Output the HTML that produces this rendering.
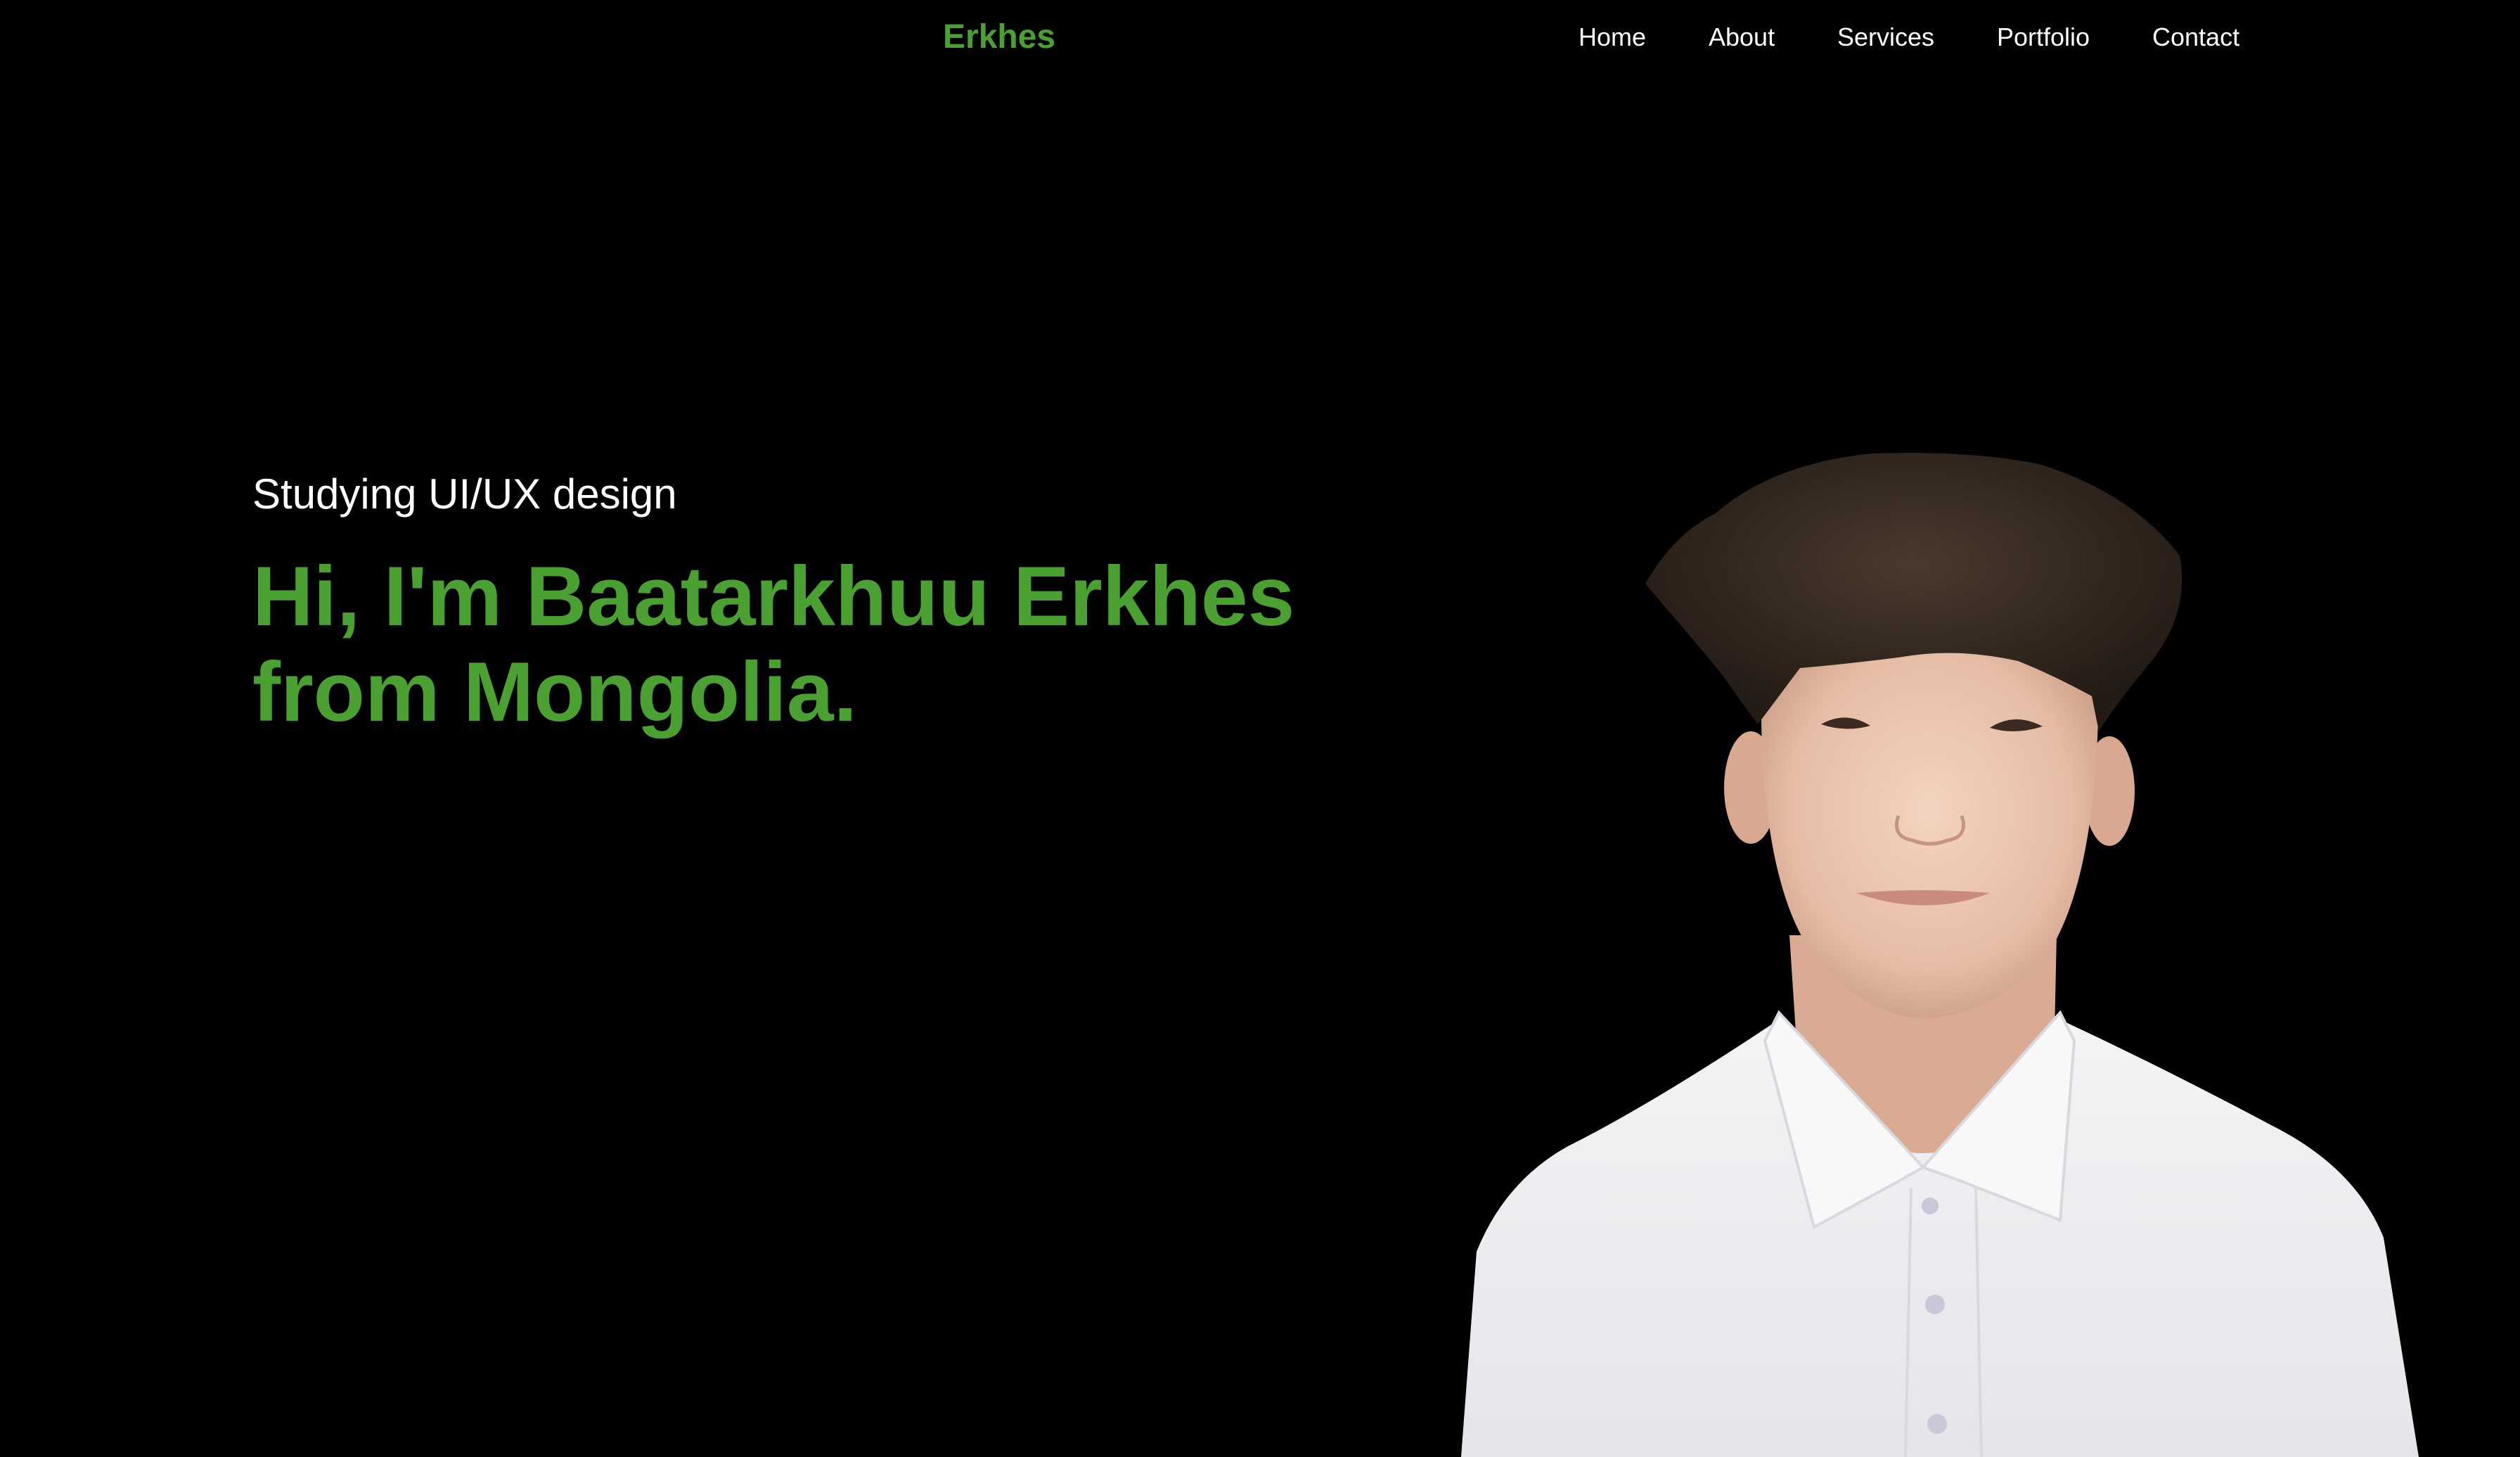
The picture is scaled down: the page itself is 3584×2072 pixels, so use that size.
<!DOCTYPE html>
<html><head><meta charset="utf-8"><style>
html,body{margin:0;padding:0;background:#000;width:3584px;height:2072px;overflow:hidden;position:relative;font-family:"Liberation Sans",Arial,sans-serif}
.t{position:absolute;white-space:nowrap;line-height:1}
.nav{color:#fff;font-size:36px;top:35px}
</style></head><body>
<svg width="3584" height="2072" style="position:absolute;left:0;top:0">
<defs>
<radialGradient id="sk" cx="0.5" cy="0.45" r="0.6"><stop offset="0" stop-color="#f3d3c0"/><stop offset="0.7" stop-color="#e6bca5"/><stop offset="1" stop-color="#c99a82"/></radialGradient>
<linearGradient id="sh" x1="0" y1="0" x2="0" y2="1"><stop offset="0" stop-color="#f4f4f6"/><stop offset="1" stop-color="#e4e4ea"/></linearGradient>
<radialGradient id="hr" cx="0.5" cy="0.4" r="0.6"><stop offset="0" stop-color="#4a3a2e"/><stop offset="1" stop-color="#221a14"/></radialGradient>
</defs>
<!-- neck -->
<path d="M2545 1330 L2560 1560 L2600 1720 L2880 1720 L2920 1560 L2925 1330 Z" fill="#d9ab92"/>
<!-- shirt -->
<path d="M2078 2072 L2100 1780 Q2140 1680 2230 1630 Q2350 1570 2530 1450 L2600 1580 Q2730 1700 2880 1580 L2930 1450 Q3080 1520 3230 1600 Q3350 1660 3390 1760 L3440 2072 Z" fill="url(#sh)"/>
<path d="M2530 1440 L2510 1480 L2580 1745 L2700 1680 L2735 1660 Z" fill="#f8f8f8" stroke="#d8d8de" stroke-width="4"/>
<path d="M2930 1440 L2950 1480 L2930 1735 L2790 1680 L2735 1660 Z" fill="#f8f8f8" stroke="#d8d8de" stroke-width="4"/>
<line x1="2718" y1="1690" x2="2710" y2="2072" stroke="#d8d8e0" stroke-width="4"/>
<line x1="2810" y1="1690" x2="2818" y2="2072" stroke="#d8d8e0" stroke-width="4"/>
<circle cx="2745" cy="1715" r="12" fill="#c8c8d8"/>
<circle cx="2752" cy="1855" r="14" fill="#c8c8d8"/>
<circle cx="2755" cy="2025" r="14" fill="#c8c8d8"/>
<!-- ears -->
<ellipse cx="2490" cy="1120" rx="38" ry="80" fill="#d9a890"/>
<ellipse cx="3000" cy="1125" rx="36" ry="78" fill="#d9a890"/>
<!-- face -->
<path d="M2505 960 Q2500 1250 2580 1360 Q2660 1450 2740 1448 Q2830 1445 2910 1360 Q2985 1250 2985 960 Q2750 860 2505 960 Z" fill="url(#sk)"/>
<!-- hair -->
<path d="M2340 830 Q2380 760 2440 730 Q2520 660 2660 645 Q2800 640 2900 660 Q3030 700 3100 790 Q3115 870 3060 940 Q3010 1000 2985 1040 L2975 990 Q2920 960 2870 940 Q2780 920 2700 935 Q2620 945 2560 950 L2500 1030 Q2470 990 2450 960 Q2400 900 2340 830 Z" fill="url(#hr)"/>
<!-- eyes -->
<path d="M2590 1030 Q2625 1010 2660 1032 Q2625 1042 2590 1030 Z" fill="#3a2a22"/>
<path d="M2830 1035 Q2865 1012 2905 1033 Q2865 1046 2830 1035 Z" fill="#3a2a22"/>
<!-- nose -->
<path d="M2700 1160 Q2690 1190 2720 1195 Q2745 1205 2770 1195 Q2800 1190 2790 1160" stroke="#c59580" stroke-width="5" fill="none"/>
<!-- mouth -->
<path d="M2640 1270 Q2735 1262 2830 1270 Q2740 1305 2640 1270 Z" fill="#c98a80"/>
</svg>
<div class="t" style="left:1341px;top:29px;font-size:48px;font-weight:bold;color:#4aa132">Erkhes</div>
<div class="t nav" style="left:2245px">Home</div>
<div class="t nav" style="left:2430px">About</div>
<div class="t nav" style="left:2613px">Services</div>
<div class="t nav" style="left:2840px">Portfolio</div>
<div class="t nav" style="left:3061px">Contact</div>
<div class="t" style="left:359px;top:673px;font-size:60px;color:#fff;line-height:1">Studying UI/UX design</div>
<div class="t" style="left:359px;top:780px;font-size:120px;font-weight:bold;color:#4aa132;line-height:136px">Hi, I'm Baatarkhuu Erkhes<br>from Mongolia.</div>
</body></html>
